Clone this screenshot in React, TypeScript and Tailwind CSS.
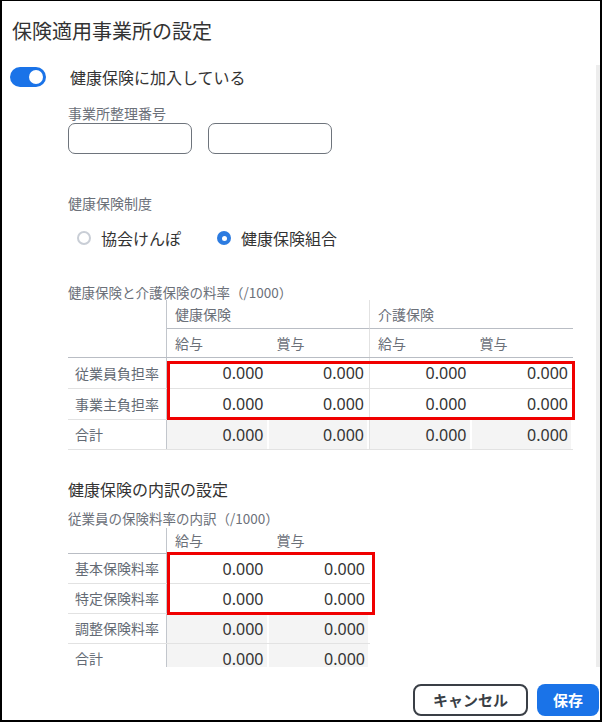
import type { ReactNode } from "react";

const HEALTH_ROWS = [
  { label: "従業員負担率", values: ["0.000", "0.000", "0.000", "0.000"] },
  { label: "事業主負担率", values: ["0.000", "0.000", "0.000", "0.000"] },
];
const HEALTH_TOTAL = ["0.000", "0.000", "0.000", "0.000"];

const BREAKDOWN_ROWS = [
  { label: "基本保険料率", values: ["0.000", "0.000"] },
  { label: "特定保険料率", values: ["0.000", "0.000"] },
];
const BREAKDOWN_FIXED = [
  { label: "調整保険料率", values: ["0.000", "0.000"] },
  { label: "合計", values: ["0.000", "0.000"] },
];

export default function App() {
  return (
    <div className="flex h-[722px] w-[602px] flex-col border-2 border-t border-black bg-white font-['Noto_Sans_CJK_JP','Noto_Sans',sans-serif] text-[#333]">
      <header className="h-[59px] shrink-0 pl-[10px] pt-[16px]">
        <h1 className="text-[20px] leading-[28px]">保険適用事業所の設定</h1>
      </header>

      <div className="flex min-h-0 flex-1">
        <div className="min-w-0 flex-1 overflow-hidden">
          <div className="mt-[7px] flex items-center pl-[8px]">
            <Toggle />
            <span className="ml-[24px] text-[16px] leading-[20px]">
              健康保険に加入している
            </span>
          </div>

          <div className="pl-[66px]">
            <p className="mt-[16px] text-[14px] leading-[20px] text-[#6b7079]">
              事業所整理番号
            </p>
            <div className="flex gap-[16px]">
              <input
                aria-label="事業所整理番号 1"
                className="h-[31px] w-[124px] rounded-[7px] border border-[#6e747c] bg-white"
              />
              <input
                aria-label="事業所整理番号 2"
                className="h-[31px] w-[124px] rounded-[7px] border border-[#6e747c] bg-white"
              />
            </div>

            <p className="mt-[39px] text-[14px] leading-[20px] text-[#6b7079]">
              健康保険制度
            </p>
            <div className="mt-[13px] flex h-[24px] items-center pl-[9px] text-[16px]">
              <Radio checked={false} />
              <span className="ml-[10px]">協会けんぽ</span>
              <span className="ml-[36px]" />
              <Radio checked />
              <span className="ml-[10px]">健康保険組合</span>
            </div>

            <p className="mt-[34px] text-[13.5px] leading-[16px] text-[#6b7079]">
              健康保険と介護保険の料率（/1000）
            </p>
            <div className="w-[505px]">
              <div className="flex h-[29px]">
                <LabelCell />
                <div className="flex w-[203px] items-center border-r border-b border-r-[#e2e2e2] border-b-[#b9bdc4] pl-[8px] text-[14px] text-[#6b7079]">
                  健康保険
                </div>
                <div className="flex w-[203px] items-center border-b border-[#b9bdc4] pl-[8px] text-[14px] text-[#6b7079]">
                  介護保険
                </div>
              </div>
              <div className="flex h-[29px] border-b border-[#b9bdc4]">
                <LabelCell />
                <HeadCell>給与</HeadCell>
                <HeadCell divider>賞与</HeadCell>
                <HeadCell>給与</HeadCell>
                <HeadCell>賞与</HeadCell>
              </div>
              <div className="relative">
                {HEALTH_ROWS.map((row) => (
                  <div key={row.label} className="flex h-[31px] border-b border-[#e2e2e2]">
                    <LabelCell>{row.label}</LabelCell>
                    {row.values.map((value, index) => (
                      <ValueCell key={index} divider={index === 1}>
                        {value}
                      </ValueCell>
                    ))}
                  </div>
                ))}
                <div className="pointer-events-none absolute top-[3px] -right-[2px] bottom-0 left-[99px] border-[3px] border-[#f00000]" />
              </div>
              <div className="flex h-[30px] border-b border-[#e2e2e2]">
                <LabelCell>合計</LabelCell>
                {HEALTH_TOTAL.map((value, index) => (
                  <ValueCell key={index} divider={index === 1} shaded>
                    {value}
                  </ValueCell>
                ))}
              </div>
            </div>

            <h2 className="mt-[28px] text-[16px] leading-[22px]">健康保険の内訳の設定</h2>
            <p className="mt-[10px] text-[13.5px] leading-[16px] text-[#6b7079]">
              従業員の保険料率の内訳（/1000）
            </p>
            <div className="mt-[2px] w-[302px]">
              <div className="flex h-[26px] border-b border-[#b9bdc4]">
                <LabelCell />
                <HeadCell>給与</HeadCell>
                <HeadCell>賞与</HeadCell>
              </div>
              <div className="relative">
                {BREAKDOWN_ROWS.map((row) => (
                  <div key={row.label} className="flex h-[30px] border-b border-[#e2e2e2]">
                    <LabelCell>{row.label}</LabelCell>
                    {row.values.map((value, index) => (
                      <ValueCell key={index}>{value}</ValueCell>
                    ))}
                  </div>
                ))}
                <div className="pointer-events-none absolute -top-[2px] -right-[5px] -bottom-[1px] left-[99px] border-[3px] border-[#f00000]" />
              </div>
              {BREAKDOWN_FIXED.map((row) => (
                <div key={row.label} className="flex h-[30px] border-b border-[#e2e2e2]">
                  <LabelCell>{row.label}</LabelCell>
                  {row.values.map((value, index) => (
                    <ValueCell key={index} shaded>
                      {value}
                    </ValueCell>
                  ))}
                </div>
              ))}
            </div>
          </div>
        </div>
        <div className="mt-[5px] w-[4px] shrink-0 bg-[#ededed]" />
      </div>

      <footer className="flex h-[53px] shrink-0 items-start justify-end gap-[9px] pt-[17px] pr-[1px]">
        <button
          type="button"
          className="h-[32px] w-[115px] rounded-[8px] border-2 border-[#3a3f46] text-[15px] font-bold text-[#3a3f46]"
        >
          キャンセル
        </button>
        <button
          type="button"
          className="h-[32px] w-[62px] rounded-[8px] bg-[#1a73e8] text-[15px] font-bold text-white"
        >
          保存
        </button>
      </footer>
    </div>
  );
}

function Toggle() {
  return (
    <span className="flex h-[20px] w-[36px] shrink-0 items-center justify-end rounded-full bg-[#1a73e8] pr-[3px]">
      <span className="h-[14px] w-[14px] rounded-full bg-white" />
    </span>
  );
}

function Radio({ checked }: { checked: boolean }) {
  if (checked) {
    return (
      <span className="flex h-[14px] w-[14px] shrink-0 items-center justify-center rounded-full bg-[#2c7be0]">
        <span className="h-[5px] w-[5px] rounded-full bg-white" />
      </span>
    );
  }
  return (
    <span className="block h-[14px] w-[14px] shrink-0 rounded-full border-2 border-[#c9ced6] bg-white" />
  );
}

function LabelCell({ children }: { children?: ReactNode }) {
  return (
    <div className="flex w-[99px] shrink-0 items-center border-r border-[#c2c6cc] pl-[7px] text-[14px] text-[#636a74]">
      {children}
    </div>
  );
}

function HeadCell({ children, divider }: { children: ReactNode; divider?: boolean }) {
  return (
    <div
      className={
        divider
          ? "flex w-[101.5px] items-center border-r border-[#e2e2e2] pl-[8px] text-[14px] text-[#6b7079]"
          : "flex w-[101.5px] items-center pl-[8px] text-[14px] text-[#6b7079]"
      }
    >
      {children}
    </div>
  );
}

function ValueCell({
  children,
  divider,
  shaded,
}: {
  children: ReactNode;
  divider?: boolean;
  shaded?: boolean;
}) {
  return (
    <div
      className={
        divider
          ? "flex w-[101.5px] border-r border-[#e2e2e2]"
          : "flex w-[101.5px]"
      }
    >
      <div
        className={
          shaded
            ? "mr-[2px] flex flex-1 items-center justify-end bg-[#f4f4f4] pr-[3px] font-['Noto_Sans',sans-serif] text-[16px] text-[#333]"
            : "mr-[2px] flex flex-1 items-center justify-end pr-[3px] font-['Noto_Sans',sans-serif] text-[16px] text-[#333]"
        }
      >
        {children}
      </div>
    </div>
  );
}
